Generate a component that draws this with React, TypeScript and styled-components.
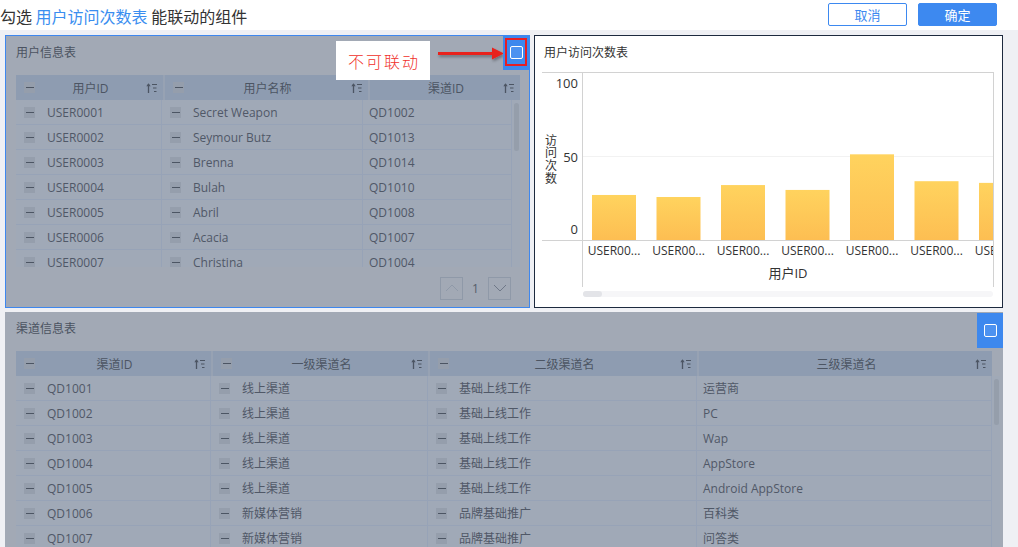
import { createGlobalStyle, styled } from "styled-components";

const GlobalStyle = createGlobalStyle`
  html, body {
    margin: 0;
    padding: 0;
    background: #eff0f4;
  }
  * {
    box-sizing: border-box;
  }
  body {
    font-family: "Open Sans", "Noto Sans CJK SC", sans-serif;
    color: #333;
  }
`;

const Page = styled.div`
  width: 1018px;
  height: 547px;
  overflow: hidden;
  background: #eff0f4;
  display: flex;
  flex-direction: column;
`;

const TopBar = styled.div`
  height: 30px;
  flex-shrink: 0;
  background: #fff;
  display: flex;
  align-items: center;
  justify-content: space-between;
  padding-right: 21px;
`;

const Heading = styled.div`
  font-size: 16px;
  color: #333;
  margin-top: 2px;
  font-family: "Noto Sans CJK SC", sans-serif;
  span {
    color: #3a8ef0;
  }
`;

const Actions = styled.div`
  display: flex;
  gap: 11px;
  margin-top: -1px;
`;

const Button = styled.button<{ $primary?: boolean }>`
  width: 79px;
  height: 23px;
  border-radius: 2px;
  border: 1px solid #3d89f0;
  background: ${(p) => (p.$primary ? "#3d89f0" : "#fff")};
  color: ${(p) => (p.$primary ? "#fff" : "#3d89f0")};
  font-family: "Noto Sans CJK SC", sans-serif;
  font-size: 13px;
  padding: 0;
`;

const Board = styled.div`
  flex: 1;
  display: grid;
  grid-template-columns: 525px 469px;
  grid-template-rows: 273px 1fr;
  gap: 4px;
  padding: 5px 0 0 5px;
  min-height: 0;
`;

const GrayPanel = styled.div<{ $active?: boolean; $wide?: boolean }>`
  position: relative;
  background: #a2a9b5;
  border: ${(p) => (p.$active ? "1px solid #3e87ee" : "none")};
  grid-column: ${(p) => (p.$wide ? "1 / 3" : "auto")};
  padding: ${(p) => (p.$wide ? "0 3px 0 11px" : "0 10px")};
  display: flex;
  flex-direction: column;
  overflow: hidden;
`;

const PanelTitle = styled.div<{ $dim?: boolean }>`
  height: 39px;
  flex-shrink: 0;
  padding-top: 9px;
  font-size: 12px;
  line-height: 14px;
  color: ${(p) => (p.$dim ? "#4b5361" : "#333")};
  font-family: "Noto Sans CJK SC", sans-serif;
`;

const ChartPanel = styled.div`
  position: relative;
  background: #fff;
  border: 1px solid #1d2a3f;
  padding: 0 0 0 7px;
  display: flex;
  flex-direction: column;
  overflow: hidden;
  ${PanelTitle} {
    height: 36px;
    padding-left: 2px;
  }
`;

/* ---------- table ---------- */

const TableWrap = styled.div<{ $width: number }>`
  width: ${(p) => p.$width}px;
  display: flex;
  flex-direction: column;
  flex: 1;
  min-height: 0;
`;

const HeadRow = styled.div<{ $cols: string; $width: number }>`
  width: ${(p) => p.$width}px;
  height: 25px;
  flex-shrink: 0;
  display: grid;
  grid-template-columns: ${(p) => p.$cols};
  gap: 2px;
  background: #97a2b3;
`;

const HeadCell = styled.div`
  background: #8e9cb1;
  display: grid;
  grid-template-columns: 30px 1fr 30px;
  align-items: center;
  padding: 0 6px 0 8px;
  font-size: 12px;
  color: #4c5563;
  font-family: "Open Sans", "Noto Sans CJK SC", sans-serif;
  svg {
    justify-self: end;
  }
`;

const HeadLabel = styled.div`
  text-align: center;
  white-space: nowrap;
`;

const BodyArea = styled.div<{ $height?: number }>`
  display: flex;
  height: ${(p) => (p.$height ? `${p.$height}px` : "auto")};
  flex: ${(p) => (p.$height ? "none" : "1")};
  overflow: hidden;
`;

const BodyRows = styled.div`
  flex: 1;
`;

const Row = styled.div<{ $cols: string }>`
  height: 25px;
  display: grid;
  grid-template-columns: ${(p) => p.$cols};
  background: #a0a9b7;
  border-bottom: 1px solid #97a3b7;
`;

const Cell = styled.div<{ $plain?: boolean }>`
  display: flex;
  align-items: center;
  padding-left: ${(p) => (p.$plain ? "6px" : "8px")};
  border-right: 1px solid #97a3b7;
  font-size: 12px;
  color: #505867;
  white-space: nowrap;
  overflow: hidden;
`;

const MinusBox = styled.span<{ $gap?: boolean }>`
  width: 11px;
  height: 11px;
  flex-shrink: 0;
  background: #959eac;
  margin-right: ${(p) => (p.$gap ? "12px" : "0")};
  display: flex;
  align-items: center;
  justify-content: center;
  &::after {
    content: "";
    width: 8px;
    height: 1px;
    background: #4c5563;
  }
`;

const ScrollTrack = styled.div`
  width: 8px;
  flex-shrink: 0;
  background: #a0a9b7;
  padding: 3px 1px 0 2px;
`;

const ScrollThumb = styled.div<{ $h: number }>`
  height: ${(p) => p.$h}px;
  border-radius: 3px;
  background: #959eab;
`;

const Pager = styled.div`
  height: 40px;
  flex-shrink: 0;
  display: flex;
  align-items: center;
  justify-content: flex-end;
  padding-right: 8px;
  padding-top: 2px;
  font-size: 12px;
  color: #555d6a;
`;

const PageBtn = styled.div`
  width: 23px;
  height: 23px;
  border: 1px solid #8f99a8;
  display: flex;
  align-items: center;
  justify-content: center;
`;

const PageNum = styled.span`
  width: 25px;
  text-align: center;
`;

/* ---------- overlays ---------- */

const Toggle = styled.div<{ $top: number }>`
  position: absolute;
  top: ${(p) => p.$top}px;
  right: -1px;
  width: 27px;
  height: 35px;
  background: #3d88ee;
  display: flex;
  align-items: center;
  justify-content: center;
  z-index: 2;
`;

const ToggleBox = styled.div`
  width: 13px;
  height: 13px;
  border: 1.5px solid #fff;
  border-radius: 2px;
  background: #4d92f0;
`;

const RedFrame = styled.div`
  position: absolute;
  left: 2px;
  top: 3px;
  width: 22px;
  height: 28px;
  border: 2px solid #e61e24;
`;

const Note = styled.div`
  position: absolute;
  left: 330px;
  top: 5px;
  width: 94px;
  height: 39px;
  background: #fff;
  color: #f0302a;
  font-family: "Noto Sans CJK SC", sans-serif;
  font-weight: 300;
  font-size: 16px;
  letter-spacing: 2px;
  padding-left: 2px;
  display: flex;
  align-items: center;
  justify-content: center;
  z-index: 2;
`;

const Arrow = styled.svg`
  position: absolute;
  left: 428px;
  top: 8px;
  z-index: 2;
`;

function SortIcon() {
  return (
    <svg width="11" height="12" viewBox="0 0 11 12">
      <path d="M2.5 11V2" stroke="#4c5563" strokeWidth="1.3" />
      <path d="M0.3 4.2L2.5 1.2L4.7 4.2Z" fill="#4c5563" />
      <path d="M6 2.5h5M7 6h3.5M8 9.5h2.5" stroke="#4c5563" strokeWidth="1.1" />
    </svg>
  );
}

interface TableProps {
  width: number;
  headCols: string;
  headWidth: number;
  bodyCols: string;
  headers: string[];
  rows: string[][];
  plainCol: number;
  bodyHeight?: number;
  thumb: number;
}

function DataTable(props: TableProps) {
  const { width, headCols, headWidth, bodyCols, headers, rows, plainCol } = props;
  return (
    <TableWrap $width={width}>
      <HeadRow $cols={headCols} $width={headWidth}>
        {headers.map((h, i) => (
          <HeadCell key={h}>
            {i !== plainCol ? <MinusBox /> : <span />}
            <HeadLabel>{h}</HeadLabel>
            <SortIcon />
          </HeadCell>
        ))}
      </HeadRow>
      <BodyArea $height={props.bodyHeight}>
        <BodyRows>
          {rows.map((r) => (
            <Row key={r[0]} $cols={bodyCols}>
              {r.map((v, i) => (
                <Cell key={i} $plain={i === plainCol}>
                  {i !== plainCol && <MinusBox $gap />}
                  {v}
                </Cell>
              ))}
            </Row>
          ))}
        </BodyRows>
        <ScrollTrack>
          <ScrollThumb $h={props.thumb} />
        </ScrollTrack>
      </BodyArea>
    </TableWrap>
  );
}

const users = [
  ["USER0001", "Secret Weapon", "QD1002"],
  ["USER0002", "Seymour Butz", "QD1013"],
  ["USER0003", "Brenna", "QD1014"],
  ["USER0004", "Bulah", "QD1010"],
  ["USER0005", "Abril", "QD1008"],
  ["USER0006", "Acacia", "QD1007"],
  ["USER0007", "Christina", "QD1004"],
];

const channels = [
  ["QD1001", "线上渠道", "基础上线工作", "运营商"],
  ["QD1002", "线上渠道", "基础上线工作", "PC"],
  ["QD1003", "线上渠道", "基础上线工作", "Wap"],
  ["QD1004", "线上渠道", "基础上线工作", "AppStore"],
  ["QD1005", "线上渠道", "基础上线工作", "Android AppStore"],
  ["QD1006", "新媒体营销", "品牌基础推广", "百科类"],
  ["QD1007", "新媒体营销", "品牌基础推广", "问答类"],
];

const visits = [26.8, 25.6, 32.7, 29.8, 51, 35, 34];

function VisitChart() {
  const base = 168;
  const scale = 1.68;
  return (
    <svg width="452" height="228" fontFamily='"Open Sans", "Noto Sans CJK SC", sans-serif'>
      <defs>
        <linearGradient id="bar" x1="0" y1="0" x2="0" y2="1">
          <stop offset="0" stopColor="#ffd35e" />
          <stop offset="1" stopColor="#fdbe52" />
        </linearGradient>
        <clipPath id="plot">
          <rect x="41" y="0" width="410" height="200" />
        </clipPath>
      </defs>
      <line x1="0" y1="0.5" x2="452" y2="0.5" stroke="#d2d2d2" />
      <line x1="451.5" y1="0" x2="451.5" y2="215" stroke="#d2d2d2" />
      <line x1="40.5" y1="0" x2="40.5" y2="215" stroke="#d2d2d2" />
      <line x1="41" y1="84.5" x2="451" y2="84.5" stroke="#f2f2f2" />
      <line x1="0" y1="168.5" x2="452" y2="168.5" stroke="#d2d2d2" />
      <g fontSize="13" fill="#333" textAnchor="end">
        <text x="36" y="15.5">100</text>
        <text x="36" y="89.5">50</text>
        <text x="36" y="161.5">0</text>
      </g>
      <text
        x="9"
        y="62"
        fontSize="12"
        fill="#333"
        letterSpacing="0.8"
        fontFamily='"Noto Sans CJK SC", sans-serif'
        style={{ writingMode: "vertical-rl" }}
      >
        访问次数
      </text>
      <g clipPath="url(#plot)">
        {visits.map((v, i) => {
          const x = 50 + i * 64.5;
          const h = v * scale;
          return (
            <g key={i}>
              <rect x={x} y={base - h} width="44" height={h} fill="url(#bar)" />
              <text x={x + 22} y="182.5" fontSize="12" fill="#333" textAnchor="middle">
                USER00...
              </text>
            </g>
          );
        })}
      </g>
      <text x="246" y="205.5" fontSize="13" fill="#333" textAnchor="middle">
        用户ID
      </text>
      <rect x="41" y="219" width="410" height="6" rx="3" fill="#f6f6f8" />
      <rect x="41" y="219" width="19" height="6" rx="3" fill="#e3e4e8" />
    </svg>
  );
}

export default function App() {
  return (
    <Page>
      <GlobalStyle />
      <TopBar>
        <Heading>
          勾选 <span>用户访问次数表</span> 能联动的组件
        </Heading>
        <Actions>
          <Button>取消</Button>
          <Button $primary>确定</Button>
        </Actions>
      </TopBar>
      <Board>
        <GrayPanel $active>
          <PanelTitle $dim>用户信息表</PanelTitle>
          <DataTable
            width={504}
            headWidth={504}
            headCols="147px 203px 1fr"
            bodyCols="146px 201px 1fr"
            headers={["用户ID", "用户名称", "渠道ID"]}
            rows={users}
            plainCol={2}
            bodyHeight={167}
            thumb={48}
          />
          <Pager>
            <PageBtn>
              <svg width="14" height="8" viewBox="0 0 14 8">
                <path d="M1 7L7 1L13 7" fill="none" stroke="#8f99a8" strokeWidth="1" />
              </svg>
            </PageBtn>
            <PageNum>1</PageNum>
            <PageBtn>
              <svg width="14" height="8" viewBox="0 0 14 8">
                <path d="M1 1L7 7L13 1" fill="none" stroke="#6f7888" strokeWidth="1" />
              </svg>
            </PageBtn>
          </Pager>
          <Note>不可联动</Note>
          <Arrow width="78" height="22" viewBox="0 0 78 22">
            <defs>
              <filter id="shade" x="-10%" y="-50%" width="120%" height="200%">
                <feDropShadow dx="1" dy="2" stdDeviation="1.5" floodColor="#000" floodOpacity="0.35" />
              </filter>
            </defs>
            <g filter="url(#shade)">
              <path d="M4 9.5H60" stroke="#e8231f" strokeWidth="3" />
              <path d="M58 3.5L70 9.5L58 15.5Z" fill="#e8231f" />
            </g>
          </Arrow>
          <Toggle $top={-1}>
            <ToggleBox />
            <RedFrame />
          </Toggle>
        </GrayPanel>
        <ChartPanel>
          <PanelTitle>用户访问次数表</PanelTitle>
          <VisitChart />
        </ChartPanel>
        <GrayPanel $wide>
          <PanelTitle $dim>渠道信息表</PanelTitle>
          <DataTable
            width={984}
            headWidth={976}
            headCols="195px 215px 267px 1fr"
            bodyCols="195px 217px 269px 1fr"
            headers={["渠道ID", "一级渠道名", "二级渠道名", "三级渠道名"]}
            rows={channels}
            plainCol={3}
            thumb={46}
          />
          <Toggle $top={1}>
            <ToggleBox />
          </Toggle>
        </GrayPanel>
      </Board>
    </Page>
  );
}
